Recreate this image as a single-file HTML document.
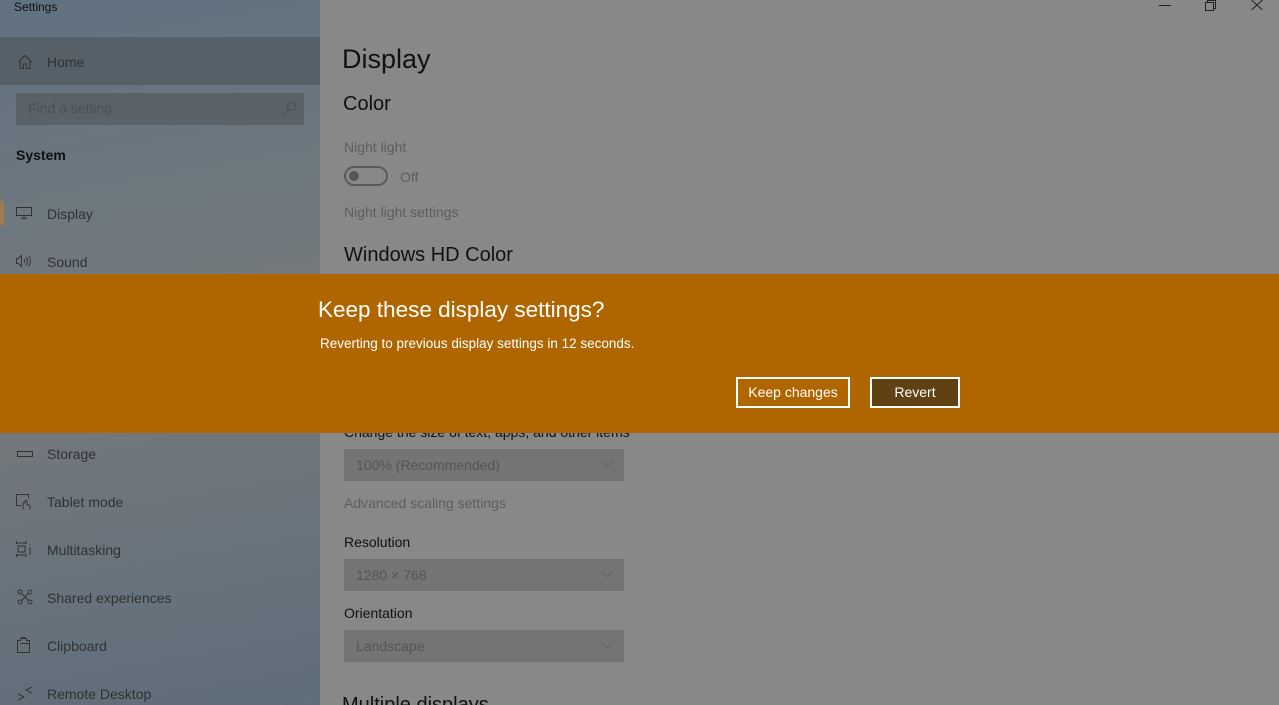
<!DOCTYPE html>
<html style="overflow:hidden;width:1279px;height:705px"><head><meta charset="utf-8"><style>
*{margin:0;padding:0;box-sizing:border-box}
body{width:1279px;height:705px;overflow:hidden;background:#888888;font-family:"Liberation Sans",sans-serif;position:relative}
.side{position:absolute;left:0;top:0;width:320px;height:705px;background:linear-gradient(170deg,#617180 0%,#6e787f 30%,#767a7b 50%,#6a747c 75%,#5f6d7a 100%)}
.t{position:absolute;white-space:nowrap}
.home{position:absolute;left:0;top:37px;width:320px;height:48px;background:#556068}
.search{position:absolute;left:16px;top:93px;width:288px;height:32px;background:#5a6269}
.nav{position:absolute;left:47px;font-size:14px;color:#2d3236}
.ic{position:absolute;left:16px}
.dd{position:absolute;left:344px;width:280px;height:32px;background:#747474}
.dd span{position:absolute;left:12px;top:8px;font-size:14px;color:#555}
.dd svg{position:absolute;right:10px;top:11px}
.banner{position:absolute;left:0;top:274px;width:1279px;height:159px;background:#b06600}
.btn{position:absolute;top:377px;height:31px;border:2px solid #fff;color:#fff;font-size:14px;text-align:center;line-height:27px}
</style></head><body>
<div class="side"></div>
<div class="t" style="left:14px;top:0;font-size:12px;color:#111">Settings</div>
<div class="home"></div>
<svg class="ic" style="top:54px;left:17px" width="16" height="16" viewBox="0 0 16 16" fill="none" stroke="#333" stroke-width="1"><path d="M1.5 8 8 1.5 14.5 8M3 6.5V14.5h3.5V10h3v4.5H13V6.5"/></svg>
<div class="t nav" style="top:54px">Home</div>
<div class="search"></div>
<div class="t" style="left:28px;top:100px;font-size:14px;color:#4a5055">Find a setting</div>
<svg style="position:absolute;left:283px;top:101px" width="14" height="14" viewBox="0 0 14 14" fill="none" stroke="#454b50"><circle cx="8.5" cy="5.5" r="4"/><path d="M5.5 8.5 1 13"/></svg>
<div class="t" style="left:16px;top:147px;font-size:14px;font-weight:bold;color:#111">System</div>
<div style="position:absolute;left:0;top:201px;width:4px;height:24px;background:#a07a50"></div>
<svg class="ic" style="top:207px" width="16" height="12" viewBox="0 0 16 12" fill="none" stroke="#333"><rect x=".5" y=".5" width="15" height="8"/><path d="M8 9v2M5 11.5h6"/></svg>
<div class="t nav" style="top:206px">Display</div>
<svg class="ic" style="top:254px" width="16" height="14" viewBox="0 0 16 14" fill="none" stroke="#333"><path d="M.5 4.5h2l3-3v11l-3-3h-2z"/><path d="M8 5a3 3 0 0 1 0 4M10 3a6 6 0 0 1 0 8M12.5 1.5a9 9 0 0 1 0 11"/></svg>
<div class="t nav" style="top:254px">Sound</div>
<svg class="ic" style="top:451px;left:17px" width="16" height="6" viewBox="0 0 16 6" fill="none" stroke="#333"><rect x=".5" y=".5" width="15" height="5"/></svg>
<div class="t nav" style="top:446px">Storage</div>
<svg class="ic" style="top:494px" width="16" height="16" viewBox="0 0 16 16" fill="none" stroke="#333"><path d="M5 11.5H.5V.5h12v4"/><path d="M7 15.5v-6a1 1 0 0 1 2 0v-2a1 1 0 0 1 2 0v3l3 1v4"/></svg>
<div class="t nav" style="top:494px">Tablet mode</div>
<svg class="ic" style="top:541px" width="16" height="16" viewBox="0 0 16 16" fill="none" stroke="#333"><path d="M.5 0v3M10 0v3M.5 2h9.5M2 5h7v6H2zM.5 13v3M10 13v3M.5 14h9.5M14 3v1M14 6v8"/></svg>
<div class="t nav" style="top:542px">Multitasking</div>
<svg class="ic" style="top:589px;left:17px" width="16" height="16" viewBox="0 0 16 16" fill="none" stroke="#333"><circle cx="3" cy="3" r="2"/><circle cx="13" cy="3" r="2"/><circle cx="3" cy="13" r="2"/><circle cx="13" cy="13" r="2"/><path d="M4.5 4.5l7 7M11.5 4.5l-7 7"/></svg>
<div class="t nav" style="top:590px">Shared experiences</div>
<svg class="ic" style="top:637px;left:17px" width="14" height="16" viewBox="0 0 14 16" fill="none" stroke="#333"><path d="M.5 3.5h3v-2h6v2h3v12H.5zM5 1.5V.5h3v1M3.5 6.5h9v9"/></svg>
<div class="t nav" style="top:638px">Clipboard</div>
<svg class="ic" style="top:687px;left:18px" width="14" height="14" viewBox="0 0 14 14" fill="none" stroke="#333"><path d="M0 7l6 3-6 3M14 0l-6 3 6 3"/></svg>
<div class="t nav" style="top:686px">Remote Desktop</div>

<svg style="position:absolute;left:1159px;top:5px" width="12" height="2"><path d="M0 .5h12" stroke="#222"/></svg>
<svg style="position:absolute;left:1205px;top:0" width="12" height="11" fill="none" stroke="#222"><rect x=".5" y="2.5" width="8" height="8"/><path d="M2.5 2.5V.5h8v8h-2"/></svg>
<svg style="position:absolute;left:1251px;top:0" width="12" height="10" fill="none" stroke="#222"><path d="M.5 0l11 10M11.5 0l-11 10"/></svg>

<div class="t" style="left:342px;top:44px;font-size:27px;color:#111">Display</div>
<div class="t" style="left:343px;top:93px;font-size:20px;color:#111">Color</div>
<div class="t" style="left:344px;top:139px;font-size:14px;color:#5e5e5e">Night light</div>
<div style="position:absolute;left:344px;top:166px;width:44px;height:20px;border:2px solid #5a5a5a;border-radius:10px"></div>
<div style="position:absolute;left:349px;top:171px;width:10px;height:10px;border-radius:5px;background:#555"></div>
<div class="t" style="left:400px;top:169px;font-size:14px;color:#5e5e5e">Off</div>
<div class="t" style="left:344px;top:204px;font-size:14px;color:#5e5e5e">Night light settings</div>
<div class="t" style="left:344px;top:244px;font-size:20px;color:#111">Windows HD Color</div>

<div class="t" style="left:344px;top:424px;font-size:14px;color:#111">Change the size of text, apps, and other items</div>
<div class="dd" style="top:449px"><span>100% (Recommended)</span><svg width="14" height="9" fill="none" stroke="#666"><path d="M1 1l6 6 6-6"/></svg></div>
<div class="t" style="left:344px;top:495px;font-size:14px;color:#5e5e5e">Advanced scaling settings</div>
<div class="t" style="left:344px;top:534px;font-size:14px;color:#111">Resolution</div>
<div class="dd" style="top:559px"><span>1280 × 768</span><svg width="14" height="9" fill="none" stroke="#666"><path d="M1 1l6 6 6-6"/></svg></div>
<div class="t" style="left:344px;top:605px;font-size:14px;color:#111">Orientation</div>
<div class="dd" style="top:630px"><span>Landscape</span><svg width="14" height="9" fill="none" stroke="#666"><path d="M1 1l6 6 6-6"/></svg></div>
<div class="t" style="left:342px;top:694px;font-size:20px;color:#111">Multiple displays</div>

<div class="banner"></div>
<div class="t" style="left:318px;top:297px;font-size:22.5px;color:#fff">Keep these display settings?</div>
<div class="t" style="left:320px;top:336px;font-size:13.5px;color:#fff">Reverting to previous display settings in 12 seconds.</div>
<div class="btn" style="left:736px;width:114px">Keep changes</div>
<div class="btn" style="left:870px;width:90px;background:#5f4113">Revert</div>
</body></html>
